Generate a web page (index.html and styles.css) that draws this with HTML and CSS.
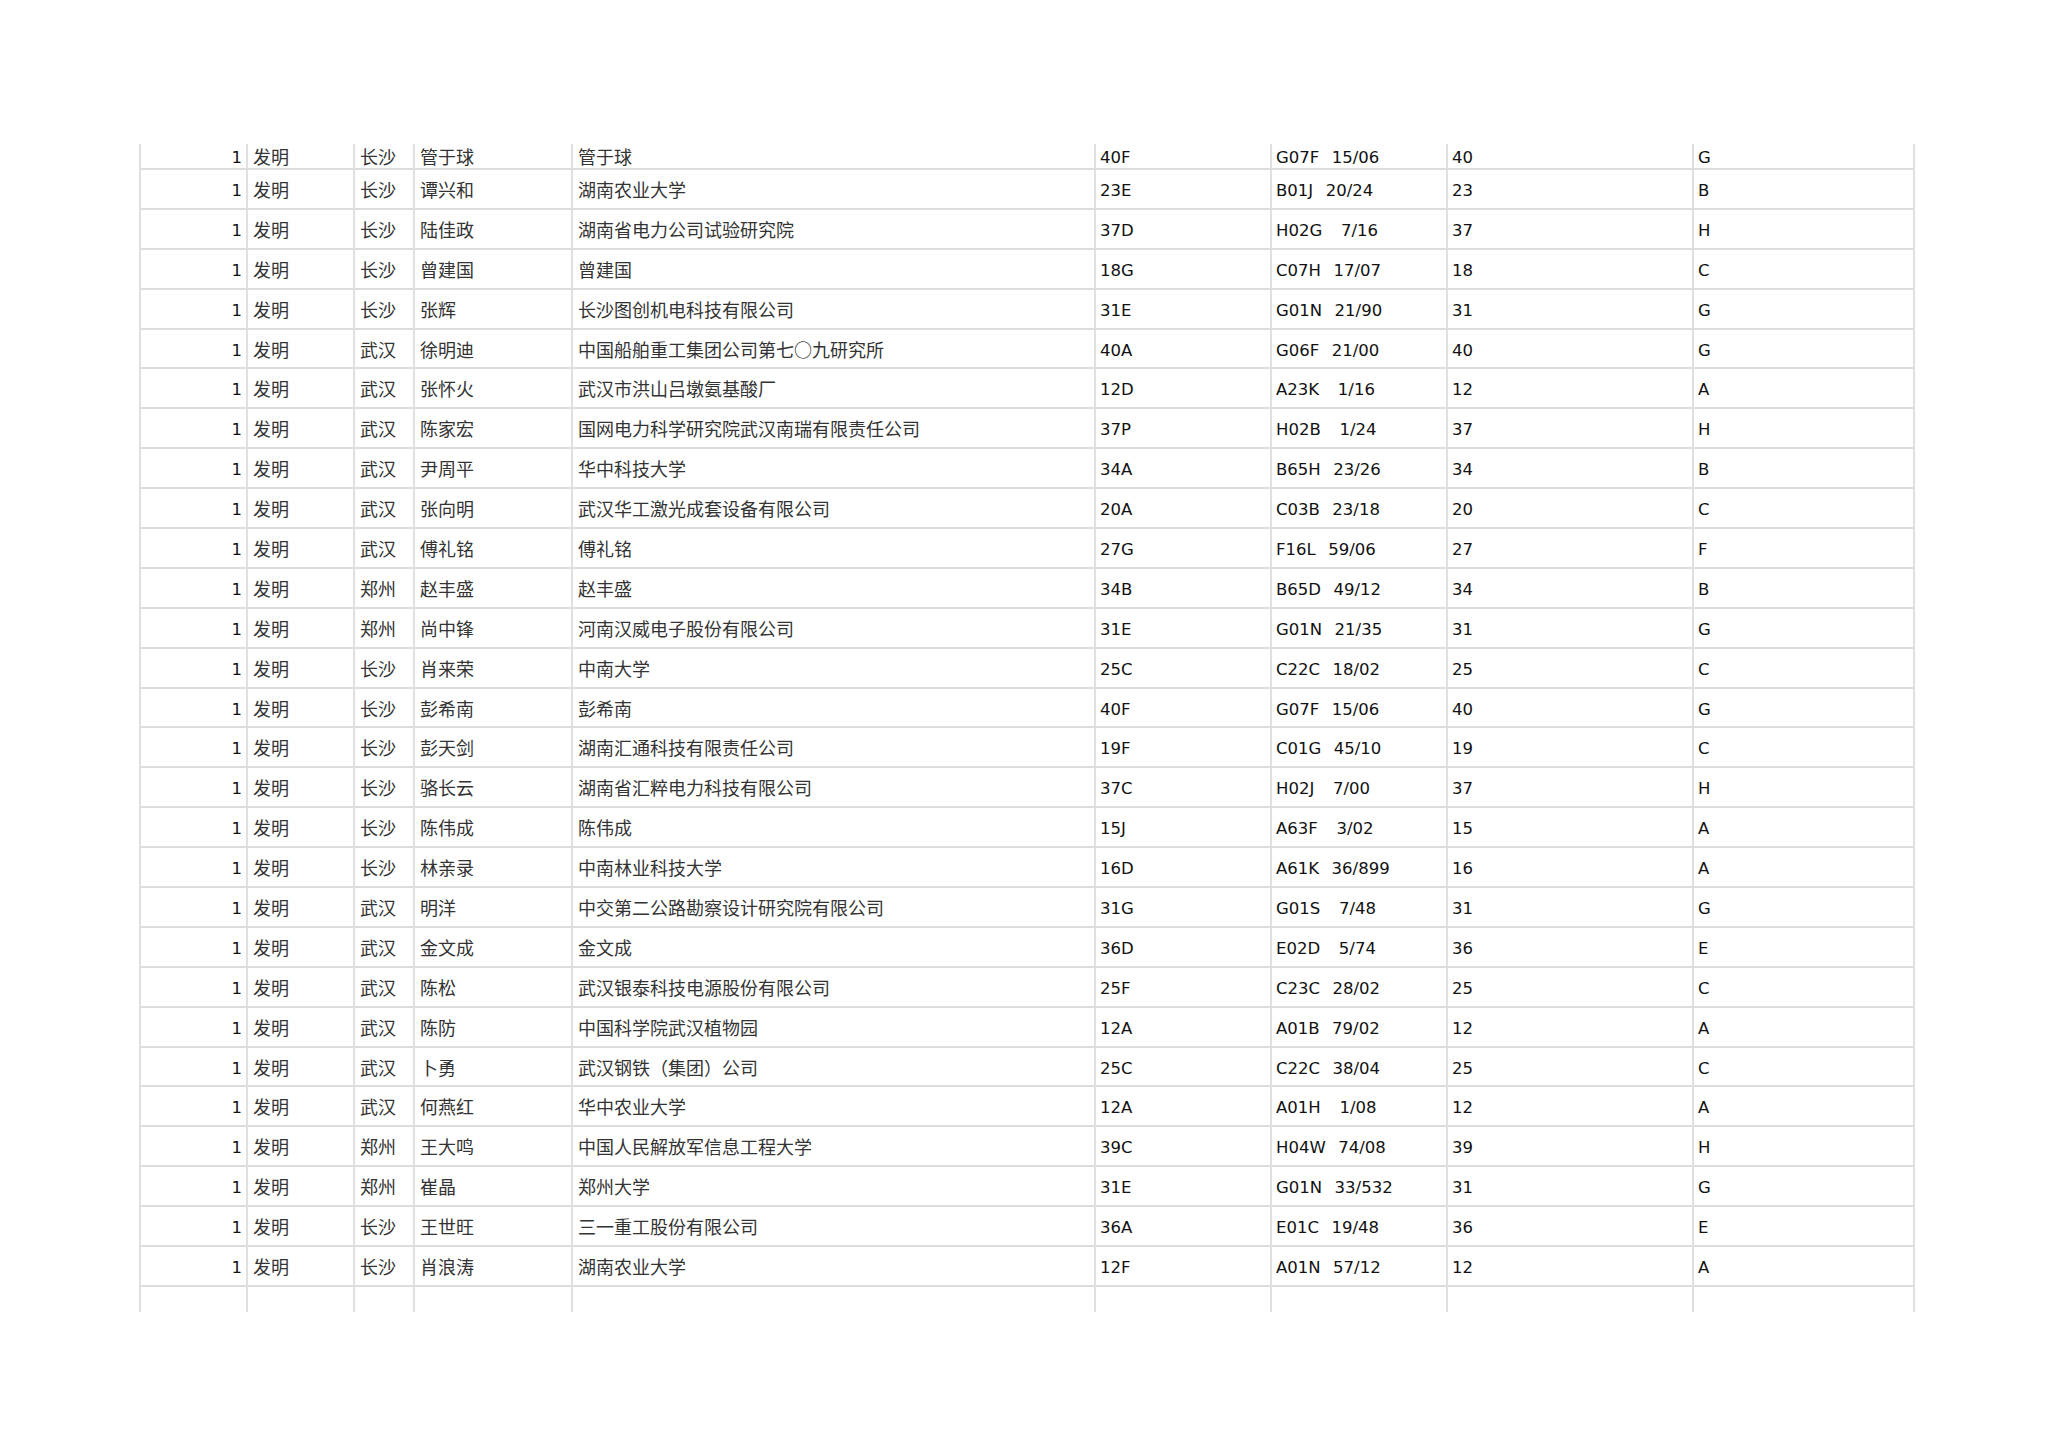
FILE: index.html
```html
<!DOCTYPE html>
<html lang="zh-CN">
<head>
<meta charset="utf-8">
<title>专利列表</title>
<link rel="stylesheet" href="styles.css">
</head>
<body>
<div class="page">
<div class="sheet">
<div class="r"><div class="c n">1</div><div class="c z">发明</div><div class="c z">长沙</div><div class="c z">管于球</div><div class="c z">管于球</div><div class="c l">40F</div><div class="c l">G07F  15/06</div><div class="c l">40</div><div class="c l e">G</div></div>
<div class="r"><div class="c n">1</div><div class="c z">发明</div><div class="c z">长沙</div><div class="c z">谭兴和</div><div class="c z">湖南农业大学</div><div class="c l">23E</div><div class="c l">B01J  20/24</div><div class="c l">23</div><div class="c l e">B</div></div>
<div class="r"><div class="c n">1</div><div class="c z">发明</div><div class="c z">长沙</div><div class="c z">陆佳政</div><div class="c z">湖南省电力公司试验研究院</div><div class="c l">37D</div><div class="c l">H02G   7/16</div><div class="c l">37</div><div class="c l e">H</div></div>
<div class="r"><div class="c n">1</div><div class="c z">发明</div><div class="c z">长沙</div><div class="c z">曾建国</div><div class="c z">曾建国</div><div class="c l">18G</div><div class="c l">C07H  17/07</div><div class="c l">18</div><div class="c l e">C</div></div>
<div class="r"><div class="c n">1</div><div class="c z">发明</div><div class="c z">长沙</div><div class="c z">张辉</div><div class="c z">长沙图创机电科技有限公司</div><div class="c l">31E</div><div class="c l">G01N  21/90</div><div class="c l">31</div><div class="c l e">G</div></div>
<div class="r"><div class="c n">1</div><div class="c z">发明</div><div class="c z">武汉</div><div class="c z">徐明迪</div><div class="c z">中国船舶重工集团公司第七○九研究所</div><div class="c l">40A</div><div class="c l">G06F  21/00</div><div class="c l">40</div><div class="c l e">G</div></div>
<div class="r"><div class="c n">1</div><div class="c z">发明</div><div class="c z">武汉</div><div class="c z">张怀火</div><div class="c z">武汉市洪山吕墩氨基酸厂</div><div class="c l">12D</div><div class="c l">A23K   1/16</div><div class="c l">12</div><div class="c l e">A</div></div>
<div class="r"><div class="c n">1</div><div class="c z">发明</div><div class="c z">武汉</div><div class="c z">陈家宏</div><div class="c z">国网电力科学研究院武汉南瑞有限责任公司</div><div class="c l">37P</div><div class="c l">H02B   1/24</div><div class="c l">37</div><div class="c l e">H</div></div>
<div class="r"><div class="c n">1</div><div class="c z">发明</div><div class="c z">武汉</div><div class="c z">尹周平</div><div class="c z">华中科技大学</div><div class="c l">34A</div><div class="c l">B65H  23/26</div><div class="c l">34</div><div class="c l e">B</div></div>
<div class="r"><div class="c n">1</div><div class="c z">发明</div><div class="c z">武汉</div><div class="c z">张向明</div><div class="c z">武汉华工激光成套设备有限公司</div><div class="c l">20A</div><div class="c l">C03B  23/18</div><div class="c l">20</div><div class="c l e">C</div></div>
<div class="r"><div class="c n">1</div><div class="c z">发明</div><div class="c z">武汉</div><div class="c z">傅礼铭</div><div class="c z">傅礼铭</div><div class="c l">27G</div><div class="c l">F16L  59/06</div><div class="c l">27</div><div class="c l e">F</div></div>
<div class="r"><div class="c n">1</div><div class="c z">发明</div><div class="c z">郑州</div><div class="c z">赵丰盛</div><div class="c z">赵丰盛</div><div class="c l">34B</div><div class="c l">B65D  49/12</div><div class="c l">34</div><div class="c l e">B</div></div>
<div class="r"><div class="c n">1</div><div class="c z">发明</div><div class="c z">郑州</div><div class="c z">尚中锋</div><div class="c z">河南汉威电子股份有限公司</div><div class="c l">31E</div><div class="c l">G01N  21/35</div><div class="c l">31</div><div class="c l e">G</div></div>
<div class="r"><div class="c n">1</div><div class="c z">发明</div><div class="c z">长沙</div><div class="c z">肖来荣</div><div class="c z">中南大学</div><div class="c l">25C</div><div class="c l">C22C  18/02</div><div class="c l">25</div><div class="c l e">C</div></div>
<div class="r"><div class="c n">1</div><div class="c z">发明</div><div class="c z">长沙</div><div class="c z">彭希南</div><div class="c z">彭希南</div><div class="c l">40F</div><div class="c l">G07F  15/06</div><div class="c l">40</div><div class="c l e">G</div></div>
<div class="r"><div class="c n">1</div><div class="c z">发明</div><div class="c z">长沙</div><div class="c z">彭天剑</div><div class="c z">湖南汇通科技有限责任公司</div><div class="c l">19F</div><div class="c l">C01G  45/10</div><div class="c l">19</div><div class="c l e">C</div></div>
<div class="r"><div class="c n">1</div><div class="c z">发明</div><div class="c z">长沙</div><div class="c z">骆长云</div><div class="c z">湖南省汇粹电力科技有限公司</div><div class="c l">37C</div><div class="c l">H02J   7/00</div><div class="c l">37</div><div class="c l e">H</div></div>
<div class="r"><div class="c n">1</div><div class="c z">发明</div><div class="c z">长沙</div><div class="c z">陈伟成</div><div class="c z">陈伟成</div><div class="c l">15J</div><div class="c l">A63F   3/02</div><div class="c l">15</div><div class="c l e">A</div></div>
<div class="r"><div class="c n">1</div><div class="c z">发明</div><div class="c z">长沙</div><div class="c z">林亲录</div><div class="c z">中南林业科技大学</div><div class="c l">16D</div><div class="c l">A61K  36/899</div><div class="c l">16</div><div class="c l e">A</div></div>
<div class="r"><div class="c n">1</div><div class="c z">发明</div><div class="c z">武汉</div><div class="c z">明洋</div><div class="c z">中交第二公路勘察设计研究院有限公司</div><div class="c l">31G</div><div class="c l">G01S   7/48</div><div class="c l">31</div><div class="c l e">G</div></div>
<div class="r"><div class="c n">1</div><div class="c z">发明</div><div class="c z">武汉</div><div class="c z">金文成</div><div class="c z">金文成</div><div class="c l">36D</div><div class="c l">E02D   5/74</div><div class="c l">36</div><div class="c l e">E</div></div>
<div class="r"><div class="c n">1</div><div class="c z">发明</div><div class="c z">武汉</div><div class="c z">陈松</div><div class="c z">武汉银泰科技电源股份有限公司</div><div class="c l">25F</div><div class="c l">C23C  28/02</div><div class="c l">25</div><div class="c l e">C</div></div>
<div class="r"><div class="c n">1</div><div class="c z">发明</div><div class="c z">武汉</div><div class="c z">陈防</div><div class="c z">中国科学院武汉植物园</div><div class="c l">12A</div><div class="c l">A01B  79/02</div><div class="c l">12</div><div class="c l e">A</div></div>
<div class="r"><div class="c n">1</div><div class="c z">发明</div><div class="c z">武汉</div><div class="c z">卜勇</div><div class="c z">武汉钢铁（集团）公司</div><div class="c l">25C</div><div class="c l">C22C  38/04</div><div class="c l">25</div><div class="c l e">C</div></div>
<div class="r"><div class="c n">1</div><div class="c z">发明</div><div class="c z">武汉</div><div class="c z">何燕红</div><div class="c z">华中农业大学</div><div class="c l">12A</div><div class="c l">A01H   1/08</div><div class="c l">12</div><div class="c l e">A</div></div>
<div class="r"><div class="c n">1</div><div class="c z">发明</div><div class="c z">郑州</div><div class="c z">王大鸣</div><div class="c z">中国人民解放军信息工程大学</div><div class="c l">39C</div><div class="c l">H04W  74/08</div><div class="c l">39</div><div class="c l e">H</div></div>
<div class="r"><div class="c n">1</div><div class="c z">发明</div><div class="c z">郑州</div><div class="c z">崔晶</div><div class="c z">郑州大学</div><div class="c l">31E</div><div class="c l">G01N  33/532</div><div class="c l">31</div><div class="c l e">G</div></div>
<div class="r"><div class="c n">1</div><div class="c z">发明</div><div class="c z">长沙</div><div class="c z">王世旺</div><div class="c z">三一重工股份有限公司</div><div class="c l">36A</div><div class="c l">E01C  19/48</div><div class="c l">36</div><div class="c l e">E</div></div>
<div class="r"><div class="c n">1</div><div class="c z">发明</div><div class="c z">长沙</div><div class="c z">肖浪涛</div><div class="c z">湖南农业大学</div><div class="c l">12F</div><div class="c l">A01N  57/12</div><div class="c l">12</div><div class="c l e">A</div></div>
<div class="r last"><div class="c n"></div><div class="c z"></div><div class="c z"></div><div class="c z"></div><div class="c z"></div><div class="c l"></div><div class="c l"></div><div class="c l"></div><div class="c l e"></div></div>
</div>
</div>
</body>
</html>
```

FILE: styles.css
```css
html, body {
  margin: 0;
  padding: 0;
  background: #ffffff;
}

.page {
  padding: 144px 0 0 139px;
}

.sheet {
  display: grid;
  grid-template-columns: 107px 107px 60px 158px 523px 176px 176px 246px 223px;
  grid-template-rows: 26px repeat(28, 39.9px) 25px;
  width: max-content;
}

.r {
  display: contents;
}

.c {
  box-sizing: border-box;
  display: flex;
  align-items: center;
  padding-left: 5px;
  border-left: 2px solid #e0e0de;
  border-bottom: 2px solid #dddddb;
  white-space: pre;
  overflow: hidden;
  color: #111111;
}

.c.e {
  border-right: 2px solid #e0e0de;
}

.last .c {
  border-bottom: none;
}

.n {
  justify-content: flex-end;
  padding-left: 0;
  padding-right: 4px;
  font-family: "DejaVu Sans", Verdana, sans-serif;
  font-size: 16.5px;
  padding-top: 3px;
}

.z {
  font-family: "Noto Sans CJK SC", "Noto Sans CJK TC", sans-serif;
  font-size: 18px;
  color: #333333;
}

.l {
  font-family: "DejaVu Sans", Verdana, sans-serif;
  font-size: 16.5px;
  word-spacing: 1px;
  padding-left: 4px;
  padding-top: 3px;
}
```
